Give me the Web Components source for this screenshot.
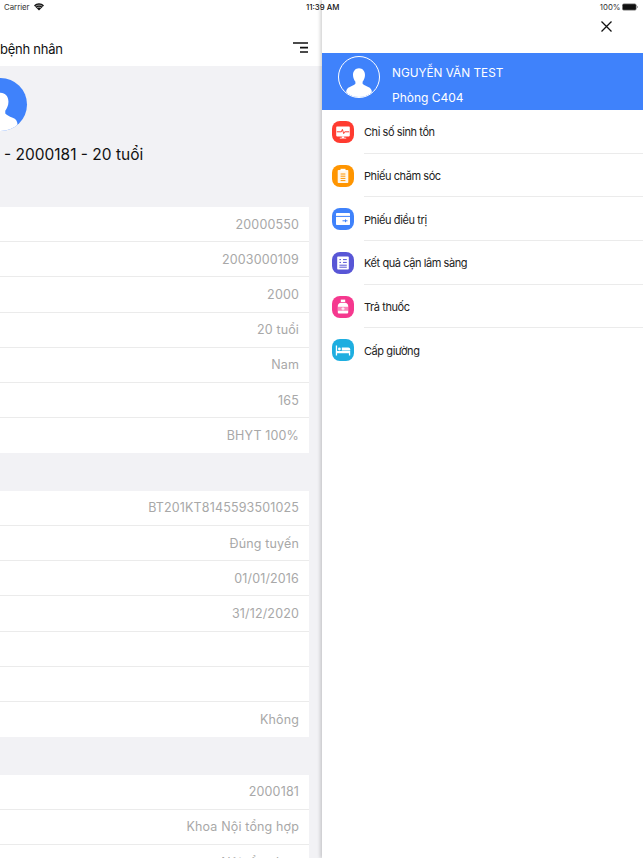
<!DOCTYPE html>
<html lang="vi">
<head>
<meta charset="utf-8">
<title>Bệnh nhân</title>
<style>
  html, body { margin: 0; height: 858px; overflow: hidden; background: #fff; }
  body { font-family: Inter, "Liberation Sans", sans-serif; }
</style>
</head>
<body>
<app-shell>
  <status-bar slot="status"></status-bar>

  <patient-panel slot="main">
    <info-group>
      <info-row>20000550</info-row>
      <info-row>2003000109</info-row>
      <info-row>2000</info-row>
      <info-row>20 tuổi</info-row>
      <info-row>Nam</info-row>
      <info-row>165</info-row>
      <info-row>BHYT 100%</info-row>
    </info-group>
    <info-group>
      <info-row>BT201KT8145593501025</info-row>
      <info-row>Đúng tuyến</info-row>
      <info-row>01/01/2016</info-row>
      <info-row>31/12/2020</info-row>
      <info-row></info-row>
      <info-row></info-row>
      <info-row>Không</info-row>
    </info-group>
    <info-group>
      <info-row>2000181</info-row>
      <info-row>Khoa Nội tổng hợp</info-row>
      <info-row>Nội tổng hợp</info-row>
    </info-group>
  </patient-panel>

  <side-drawer slot="drawer">
    <drawer-item color="#ff3b30" label="Chỉ số sinh tồn">
      <svg viewBox="0 0 22 22" width="22" height="22">
        <path d="M5 5.600h12a.8.8 0 0 1 .8.8v8.200a.8.8 0 0 1-.8.8H5a.8.8 0 0 1-.8-.8V6.400a.8.8 0 0 1 .8-.8z" fill="#fff"/>
        <path d="M4.800 10.800h4.600l1-2.400 1.300 4.200 1-1.800h4.500" fill="none" stroke="#ff3b30" stroke-width="1"/>
        <path d="M9.800 15.400h2.400v1.400h2v.8H7.800v-.8h2z" fill="#fff"/>
      </svg>
    </drawer-item>
    <drawer-item color="#ff9500" label="Phiếu chăm sóc">
      <svg viewBox="0 0 22 22" width="22" height="22">
        <path d="M6.500 5h9a.8.8 0 0 1 .8.8v11.400a.8.8 0 0 1-.8.8h-9a.8.8 0 0 1-.8-.8V5.800a.8.8 0 0 1 .8-.8z" fill="#fff" opacity=".92"/>
        <path d="M8.500 3.800h5v2.400h-5z" fill="#fff"/>
        <path d="M8.600 9h4.800M8.600 11.200h4.800M8.600 13.400h4.800M8.600 15.600h4.800" stroke="#ff9500" stroke-width="1"/>
      </svg>
    </drawer-item>
    <drawer-item color="#3f82fb" label="Phiếu điều trị">
      <svg viewBox="0 0 22 22" width="22" height="22">
        <path d="M4.800 5h12.400a.8.8 0 0 1 .8.8v10.400a.8.800 0 0 1-.8.8H4.800a.8.8 0 0 1-.8-.8V5.800a.8.8 0 0 1 .8-.8z" fill="#fff"/>
        <path d="M4 8.400h14" stroke="#3f82fb" stroke-width="1"/>
        <path d="M10.500 12.800h5M13.500 11.400v2.800" stroke="#3f82fb" stroke-width="1"/>
      </svg>
    </drawer-item>
    <drawer-item color="#5856d6" label="Kết quả cận lâm sàng">
      <svg viewBox="0 0 22 22" width="22" height="22">
        <path d="M6 4.500h10a.8.8 0 0 1 .8.8v11.400a.8.8 0 0 1-.8.8H6a.8.8 0 0 1-.8-.8V5.300a.8.8 0 0 1 .8-.8z" fill="#fff"/>
        <path d="M7.400 7.600h1.600M7.400 10.400h1.600M11 7.600h3.800M11 10.400h3.800M7.400 13.200h7.400M7.400 15.200h7.400" stroke="#5856d6" stroke-width="1"/>
      </svg>
    </drawer-item>
    <drawer-item color="#f5388e" label="Trả thuốc">
      <svg viewBox="0 0 22 22" width="22" height="22">
        <path d="M8.800 3.600h4.400v2.400H8.800z" fill="#fff"/>
        <path d="M8.600 6.700h4.800c1.900.7 2.800 1.800 2.800 3.300v6.600a1 1 0 0 1-1 1H6.800a1 1 0 0 1-1-1V10c0-1.500.9-2.600 2.800-3.300z" fill="#fff"/>
        <path d="M5.800 10.800h10.400v4H5.800z" fill="#f5388e" opacity=".6"/>
        <path d="M9.400 12.800h3.200M11 11.200v3.200" stroke="#fff" stroke-width="1"/>
      </svg>
    </drawer-item>
    <drawer-item color="#1eaee0" label="Cấp giường">
      <svg viewBox="0 0 22 22" width="22" height="22">
        <path d="M3.800 6.500h1.300v5.600h13.100v4.400h-1.300v-2.200H5.100v2.200H3.800z" fill="#fff"/>
        <circle cx="7.400" cy="10" r="1.400" fill="#fff"/>
        <path d="M9.800 8.400h6.600a1.800 1.800 0 0 1 1.800 1.800v1.200H9.800z" fill="#fff"/>
      </svg>
    </drawer-item>
  </side-drawer>
</app-shell>

<script>
  const PERSON = /* html */ `
    <path d="M50 28c-9 0-15 7-15 17 0 7 3 13 6 17v5c-2 3-7 5-14 8-6 2-9 7-9 12v13h64V87c0-5-3-10-9-12-7-3-12-5-14-8v-5c3-4 6-10 6-17 0-10-6-17-15-17z" fill="#fff"/>
  `;

  class AppShell extends HTMLElement {
    constructor() {
      super();
      this.attachShadow({ mode: "open" });
      this.shadowRoot.innerHTML = /* html */ `
        <style>
          :host { display: flex; position: relative; width: 643px; height: 858px; overflow: hidden; }
          .status { position: absolute; left: 0; right: 0; top: 0; z-index: 2; }
        </style>
        <div class="status"><slot name="status"></slot></div>
        <slot name="main"></slot>
        <slot name="drawer"></slot>
      `;
    }
  }

  class StatusBar extends HTMLElement {
    constructor() {
      super();
      this.attachShadow({ mode: "open" });
      this.shadowRoot.innerHTML = /* html */ `
        <style>
          :host { display: grid; grid-template-columns: 306px 34px 1fr; align-items: center; height: 13px; padding: 0 5px 0 4px; font-size: 7.800px; color: #333; white-space: nowrap; }
          .left { display: flex; align-items: center; gap: 4px; }
          .right { display: flex; align-items: center; justify-content: flex-end; gap: 1.500px; }
          .time { font-weight: 500; color: #111; margin-left: -4px; }
          .battery { display: block; }
        </style>
        <div class="left">
          <span>Carrier</span>
          <svg width="10" height="8" viewBox="0 0 10 8">
            <path d="M5 7.600 0 2.400C2.800-.5 7.200-.5 10 2.400z" fill="#111"/>
            <path d="M1.500 3.300c2-1.600 5-1.600 7 0" fill="none" stroke="#fff" stroke-width=".6"/>
            <path d="M2.900 4.900c1.200-.9 3-.9 4.200 0" fill="none" stroke="#fff" stroke-width=".6"/>
          </svg>
        </div>
        <div class="time">11:39 AM</div>
        <div class="right">
          <span>100%</span>
          <svg class="battery" width="16" height="8" viewBox="0 0 16 8">
            <rect x=".3" y=".8" width="14" height="6.400" rx="1.500" fill="#111" stroke="#aaa" stroke-width=".6"/>
            <rect x="14.800" y="3" width="1" height="2" fill="#999"/>
          </svg>
        </div>
      `;
    }
  }

  class PatientPanel extends HTMLElement {
    constructor() {
      super();
      this.attachShadow({ mode: "open" });
      this.shadowRoot.innerHTML = /* html */ `
        <style>
          :host { display: flex; flex-direction: column; flex: 0 0 322px; height: 858px; background: #f2f2f5; overflow: hidden; }
          header { display: flex; align-items: flex-end; justify-content: space-between; height: 66px; box-sizing: border-box; padding: 0 14px 9px 0; background: #fff; flex: none; }
          h1 { margin: 0; font-size: 13px; line-height: 16px; font-weight: 400; letter-spacing: -.25px; color: #111; }
          .menu { margin-bottom: 4px; display: block; }
          .avatar { display: block; margin: 12px 0 0 -26px; border-radius: 50%; background: #3f82fb; flex: none; }
          .name { margin: 13px 0 0 4px; font-size: 15.500px; line-height: 22px; color: #111; flex: none; }
          .groups { display: flex; flex-direction: column; gap: 37.500px; margin: 41px 13px 0 0; }
        </style>
        <header>
          <h1>bệnh nhân</h1>
          <svg class="menu" width="15" height="11" viewBox="0 0 15 11">
            <path d="M0 1h15M7 5.600h8M7 10h8" stroke="#111" stroke-width="1.700"/>
          </svg>
        </header>
        <svg class="avatar" width="53" height="53" viewBox="0 0 100 100">${PERSON}</svg>
        <div class="name">- 2000181 - 20 tuổi</div>
        <div class="groups"><slot></slot></div>
      `;
    }
  }

  class InfoGroup extends HTMLElement {
    constructor() {
      super();
      this.attachShadow({ mode: "open" });
      this.shadowRoot.innerHTML = /* html */ `
        <style>
          :host { display: block; background: #fff; }
        </style>
        <slot></slot>
      `;
    }
  }

  class InfoRow extends HTMLElement {
    constructor() {
      super();
      this.attachShadow({ mode: "open" });
      this.shadowRoot.innerHTML = /* html */ `
        <style>
          :host { display: flex; align-items: center; justify-content: flex-end; height: 35.200px; box-sizing: border-box; padding-right: 10px; font-size: 12.500px; letter-spacing: .15px; color: #a8a8a8; border-bottom: 1px solid #ebebeb; }
          :host(:last-child) { border-bottom: 0; }
        </style>
        <slot></slot>
      `;
    }
  }

  class SideDrawer extends HTMLElement {
    constructor() {
      super();
      this.attachShadow({ mode: "open" });
      this.shadowRoot.innerHTML = /* html */ `
        <style>
          :host { display: flex; flex-direction: column; flex: 1; height: 858px; background: #fff; box-shadow: -2px 0 3px rgba(0, 0, 0, .16); position: relative; }
          .top { display: flex; justify-content: flex-end; align-items: flex-end; height: 53px; box-sizing: border-box; padding: 0 31px 21px 0; }
          .close { display: block; }
          .user { display: flex; align-items: flex-start; gap: 12px; height: 57px; box-sizing: border-box; padding: 3px 0 0 16px; background: #3f82fb; color: #fff; }
          .user svg { display: block; border: 1px solid #fff; border-radius: 50%; box-sizing: border-box; }
          .text { padding-top: 10px; }
          .name { font-size: 11.800px; line-height: 15px; }
          .room { font-size: 12px; line-height: 15px; margin-top: 9px; }
        </style>
        <div class="top">
          <svg class="close" width="11" height="11" viewBox="0 0 11 11">
            <path d="M.5.500l10 10M10.500.500l-10 10" stroke="#111" stroke-width="1.300"/>
          </svg>
        </div>
        <div class="user">
          <svg width="42" height="42" viewBox="0 0 100 100">${PERSON}</svg>
          <div class="text">
            <div class="name">NGUYỄN VĂN TEST</div>
            <div class="room">Phòng C404</div>
          </div>
        </div>
        <slot></slot>
      `;
    }
  }

  class DrawerItem extends HTMLElement {
    constructor() {
      super();
      this.attachShadow({ mode: "open" });
      this.shadowRoot.innerHTML = /* html */ `
        <style>
          :host { display: flex; align-items: center; gap: 10px; height: 43.700px; padding-left: 10px; }
          .icon { flex: none; width: 22px; height: 22px; border-radius: 8px; display: block; }
          ::slotted(svg) { display: block; }
          .label { flex: 1; align-self: stretch; display: flex; align-items: center; padding-top: 2px; font-size: 11px; letter-spacing: -.42px; color: #222; border-bottom: 1px solid #ebebeb; }
          :host(:last-child) .label { border-bottom: 0; }
        </style>
        <div class="icon"><slot></slot></div>
        <div class="label"></div>
      `;
      this.shadowRoot.querySelector(".icon").style.background = this.getAttribute("color") || "";
      this.shadowRoot.querySelector(".label").textContent = this.getAttribute("label") || "";
    }
  }

  customElements.define("app-shell", AppShell);
  customElements.define("status-bar", StatusBar);
  customElements.define("patient-panel", PatientPanel);
  customElements.define("info-group", InfoGroup);
  customElements.define("info-row", InfoRow);
  customElements.define("side-drawer", SideDrawer);
  customElements.define("drawer-item", DrawerItem);
</script>
</body>
</html>
